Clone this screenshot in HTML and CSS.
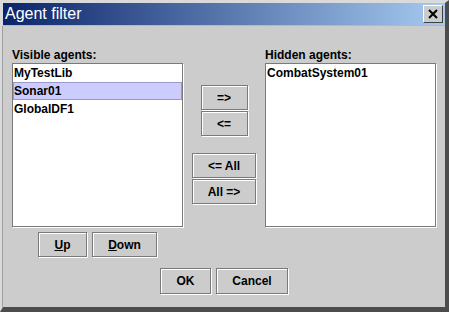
FILE: index.html
```html
<!DOCTYPE html>
<html lang="en">

<head>
    <meta charset="UTF-8">
    <title>Agent filter</title>
    <link rel="stylesheet" href="styles.css">
</head>

<body>
    <div class="window">
        <div class="titlebar">
            <span class="title">Agent filter</span>
            <span class="close">
                <svg width="10" height="10" viewBox="0 0 10 10">
                    <path d="M1 1 L9 9 M9 1 L1 9" stroke="#000" stroke-width="2" fill="none"/>
                </svg>
            </span>
        </div>
        <div class="content">
            <div class="panes">
                <div class="col">
                    <div class="label">Visible agents:</div>
                    <ul class="list">
                        <li>MyTestLib</li>
                        <li class="selected">Sonar01</li>
                        <li>GlobalDF1</li>
                    </ul>
                    <div class="actions">
                        <button class="btn btn_up"><u>U</u>p</button>
                        <button class="btn btn_down"><u>D</u>own</button>
                    </div>
                </div>
                <div class="mid">
                    <button class="btn btn_move">=&gt;</button>
                    <button class="btn btn_move">&lt;=</button>
                    <button class="btn btn_all first">&lt;= All</button>
                    <button class="btn btn_all">All =&gt;</button>
                </div>
                <div class="col">
                    <div class="label">Hidden agents:</div>
                    <ul class="list">
                        <li>CombatSystem01</li>
                    </ul>
                </div>
            </div>
            <div class="footer">
                <button class="btn btn_ok">OK</button>
                <button class="btn btn_cancel">Cancel</button>
            </div>
        </div>
    </div>
</body>

</html>
```

FILE: styles.css
```css
* {
    margin: 0;
    padding: 0;
}

body {
    background: #ccc;
    font-family: "Liberation Sans", Arial, sans-serif;
}

.window {
    width: 449px;
    height: 312px;
    box-sizing: border-box;
    border-style: solid;
    border-width: 3px 4px 5px 3px;
    border-color: #dadada #4c4c4c #4c4c4c #dadada;
    background: #ccc;
    display: flex;
    flex-direction: column;
}

.titlebar {
    height: 22px;
    padding: 0 2px 0 2px;
    display: flex;
    align-items: center;
    justify-content: space-between;
    background: linear-gradient(to right, #0a246a, #a6caf0);
    border-bottom: 1px solid #b8b8b8;
}

.title {
    color: #fff;
    font-size: 16px;
}

.close {
    width: 20px;
    height: 18px;
    box-sizing: border-box;
    display: flex;
    align-items: center;
    justify-content: center;
    background: #ccc;
    border: 1px solid;
    border-color: #fff #404040 #404040 #fff;
}

.content {
    flex: 1;
    padding: 22px 9px 0;
    border-left: 1px solid #a0a0a0;
    margin-left: -1px;
}

.panes {
    display: grid;
    grid-template-columns: 171px 82px 171px;
}

.col {
    display: flex;
    flex-direction: column;
}

.label {
    height: 15px;
    font-size: 12px;
    line-height: 14px;
    font-weight: bold;
}

.list {
    height: 164px;
    box-sizing: border-box;
    background: #fff;
    border: 1px solid #7a7a7a;
    box-shadow: 1px 1px #fff;
}

.list li {
    list-style: none;
    height: 18px;
    line-height: 18px;
    padding-left: 1px;
    font-size: 12px;
    font-weight: bold;
}

.list li.selected {
    background: #ccccff;
    box-shadow: inset 0 0 0 1px #9999cc;
}

.btn {
    height: 25px;
    box-sizing: border-box;
    background: #ccc;
    border: 1px solid #7a7a7a;
    box-shadow: inset 1px 1px #fff, 1px 1px #fff;
    font-family: "Liberation Sans", Arial, sans-serif;
    font-size: 12px;
    font-weight: bold;
    color: #000;
}

.actions {
    display: flex;
    justify-content: center;
    gap: 5px;
    margin-top: 5px;
}

.btn_up {
    width: 49px;
}

.btn_down {
    width: 65px;
}

.mid {
    display: flex;
    flex-direction: column;
    align-items: center;
    padding-top: 37px;
}

.btn_move {
    width: 47px;
    margin-bottom: 1px;
}

.btn_all {
    width: 64px;
    margin-bottom: 1px;
}

.btn_all.first {
    margin-top: 16px;
}

.footer {
    display: flex;
    justify-content: center;
    gap: 5px;
    margin-top: 11px;
}

.btn_ok,
.btn_cancel {
    height: 26px;
}

.btn_ok {
    width: 51px;
}

.btn_cancel {
    width: 72px;
}
```
